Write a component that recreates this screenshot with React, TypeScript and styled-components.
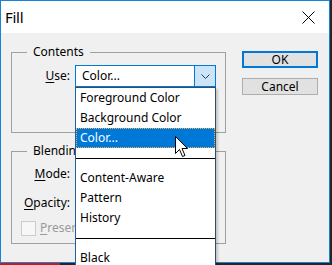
import React from 'react';
import styled, { createGlobalStyle } from 'styled-components';

const Global = createGlobalStyle`
  html, body { margin: 0; padding: 0; background: #262626; overflow: hidden; }
  body { font-family: "Noto Sans", "Segoe UI", sans-serif; font-size: 12px; color: #000; }
  #root { width: 332px; height: 265px; }
`;

const Page = styled.div`
  width: 332px;
  height: 265px;
  display: flex;
  flex-direction: column;
`;

const Window = styled.div`
  position: relative;
  box-sizing: border-box;
  width: 330px;
  height: 263px;
  border: 1px solid #1a82d6;
  background: #f0f0f0;
  display: flex;
  flex-direction: column;
`;

const BottomStrip = styled.div`
  height: 2px;
  display: flex;
`;

const RedSegment = styled.div`
  width: 60px;
  background: #c8191c;
`;

const TitleBar = styled.div`
  height: 32px;
  background: #fff;
  display: flex;
  align-items: center;
  justify-content: space-between;
  padding-left: 4px;
`;

const Title = styled.div`
  font-size: 15px;
  letter-spacing: -0.3px;
  line-height: 20px;
`;

const CloseButton = styled.div`
  width: 42px;
  height: 32px;
  display: flex;
  align-items: center;
  justify-content: center;
`;

const Body = styled.div`
  display: flex;
  gap: 16px;
  padding: 11px 11px 0 10px;
`;

const LeftColumn = styled.div`
  width: 215px;
  display: flex;
  flex-direction: column;
  gap: 10px;
`;

const Group = styled.fieldset<{ $padTop: number; $padBottom: number }>`
  margin: 0;
  min-width: 0;
  box-sizing: border-box;
  width: 215px;
  border: 1px solid #a0a0a0;
  padding: ${p => p.$padTop}px 9px ${p => p.$padBottom}px 0;
`;

const Legend = styled.legend`
  margin-left: 15px;
  padding: 0 6px;
  line-height: 16px;
`;

const FormGrid = styled.div<{ $gap: number }>`
  display: grid;
  grid-template-columns: 58px 141px;
  column-gap: 5px;
  row-gap: ${p => p.$gap}px;
  align-items: center;
`;

const Label = styled.div<{ $disabled?: boolean }>`
  text-align: right;
  line-height: 16px;
  white-space: nowrap;
  color: ${p => (p.$disabled ? '#9a9a9a' : '#000')};
`;

const Accel = styled.span`
  text-decoration: underline;
  text-underline-offset: 2px;
`;

const SelectWrap = styled.div`
  position: relative;
  height: 22px;
`;

const SelectBox = styled.div<{ $focused?: boolean }>`
  box-sizing: border-box;
  height: 22px;
  border: 1px solid ${p => (p.$focused ? '#0078d7' : '#adadad')};
  background: #fff;
  display: flex;
  align-items: stretch;
`;

const SelectText = styled.div`
  flex: 1;
  padding-left: 6px;
  line-height: 20px;
`;

const DropButton = styled.div`
  width: 20px;
  background: #cce4f7;
  border-left: 1px solid #0078d7;
  display: flex;
  align-items: center;
  justify-content: center;
`;

const DropList = styled.div`
  position: absolute;
  z-index: 5;
  left: 0;
  top: 100%;
  width: 141px;
  box-sizing: border-box;
  border: 1px solid #2f4f6f;
  border-left-color: #1e5f9e;
  background: #fff;
  box-shadow: 2px 2px 2px rgba(0, 0, 0, 0.18);
`;

const Item = styled.div<{ $selected?: boolean }>`
  height: 20px;
  line-height: 20px;
  padding-left: 4px;
  white-space: nowrap;
  background: ${p => (p.$selected ? '#0078d7' : 'transparent')};
  color: ${p => (p.$selected ? '#fff' : '#000')};
  outline: ${p => (p.$selected ? '1px dotted #f7b34a' : 'none')};
  outline-offset: -1px;
`;

const Separator = styled.div`
  height: 20px;
  display: flex;
  align-items: center;
  &::before {
    content: '';
    flex: 1;
    height: 1px;
    background: #000;
  }
`;

const OpacityRow = styled.div`
  display: flex;
  align-items: center;
  gap: 4px;
  height: 22px;
`;

const NumberField = styled.div`
  box-sizing: border-box;
  width: 48px;
  height: 22px;
  border: 1px solid #adadad;
  background: #fff;
`;

const CheckRow = styled.div`
  width: 63px;
  overflow: hidden;
  display: flex;
  align-items: center;
  gap: 4px;
  padding-left: 9px;
  margin-top: 6px;
`;

const CheckBox = styled.div`
  flex: none;
  box-sizing: border-box;
  width: 15px;
  height: 15px;
  border: 1px solid #cccccc;
  background: #f7f7f7;
`;

const RightColumn = styled.div`
  width: 76px;
  display: flex;
  flex-direction: column;
  gap: 10px;
  padding-top: 7px;
`;

const Button = styled.div<{ $default?: boolean }>`
  box-sizing: border-box;
  height: 17px;
  border: ${p => (p.$default ? '2px solid #0078d7' : '1px solid #adadad')};
  background: #e1e1e1;
  display: flex;
  align-items: center;
  justify-content: center;
  line-height: 14px;
`;

const Cursor = styled.svg`
  position: absolute;
  z-index: 10;
  left: 174px;
  top: 135px;
`;

export default function App() {
  return (
    <>
      <Global />
      <Page>
        <Window>
          <TitleBar>
            <Title>Fill</Title>
            <CloseButton>
              <svg width="13" height="13" viewBox="0 0 13 13">
                <path d="M0.5 0.5 L12.5 12.5 M12.5 0.5 L0.5 12.5" stroke="#000" strokeWidth="1" fill="none" />
              </svg>
            </CloseButton>
          </TitleBar>
          <Body>
            <LeftColumn>
              <Group $padTop={5} $padBottom={45}>
                <Legend>Contents</Legend>
                <FormGrid $gap={7}>
                  <Label>
                    <Accel>U</Accel>se:
                  </Label>
                  <SelectWrap>
                    <SelectBox $focused>
                      <SelectText>Color...</SelectText>
                      <DropButton>
                        <svg width="9" height="5" viewBox="0 0 9 5">
                          <polyline points="0.5,0.5 4.5,4.5 8.5,0.5" stroke="#2a3a4a" strokeWidth="1" fill="none" />
                        </svg>
                      </DropButton>
                    </SelectBox>
                    <DropList>
                      <Item>Foreground Color</Item>
                      <Item>Background Color</Item>
                      <Item $selected>Color...</Item>
                      <Separator />
                      <Item>Content-Aware</Item>
                      <Item>Pattern</Item>
                      <Item>History</Item>
                      <Separator />
                      <Item>Black</Item>
                    </DropList>
                  </SelectWrap>
                </FormGrid>
              </Group>
              <Group $padTop={4} $padBottom={7}>
                <Legend>Blending</Legend>
                <FormGrid $gap={7}>
                  <Label>
                    <Accel>M</Accel>ode:
                  </Label>
                  <SelectBox />
                  <Label>
                    <Accel>O</Accel>pacity:
                  </Label>
                  <OpacityRow>
                    <NumberField />
                  </OpacityRow>
                </FormGrid>
                <CheckRow>
                  <CheckBox />
                  <Label $disabled>
                    <Accel>P</Accel>reserve Transparency
                  </Label>
                </CheckRow>
              </Group>
            </LeftColumn>
            <RightColumn>
              <Button $default>OK</Button>
              <Button>Cancel</Button>
            </RightColumn>
          </Body>
          <Cursor width="13" height="21" viewBox="0 0 13 21">
            <path d="M0.5 0.5 L0.5 17.5 L4.5 13.5 L7.5 20.5 L10 19.5 L7 12.5 L12.5 12.5 Z" fill="#fff" stroke="#000" strokeWidth="1" strokeLinejoin="miter" />
          </Cursor>
        </Window>
        <BottomStrip>
          <RedSegment />
        </BottomStrip>
      </Page>
    </>
  );
}
